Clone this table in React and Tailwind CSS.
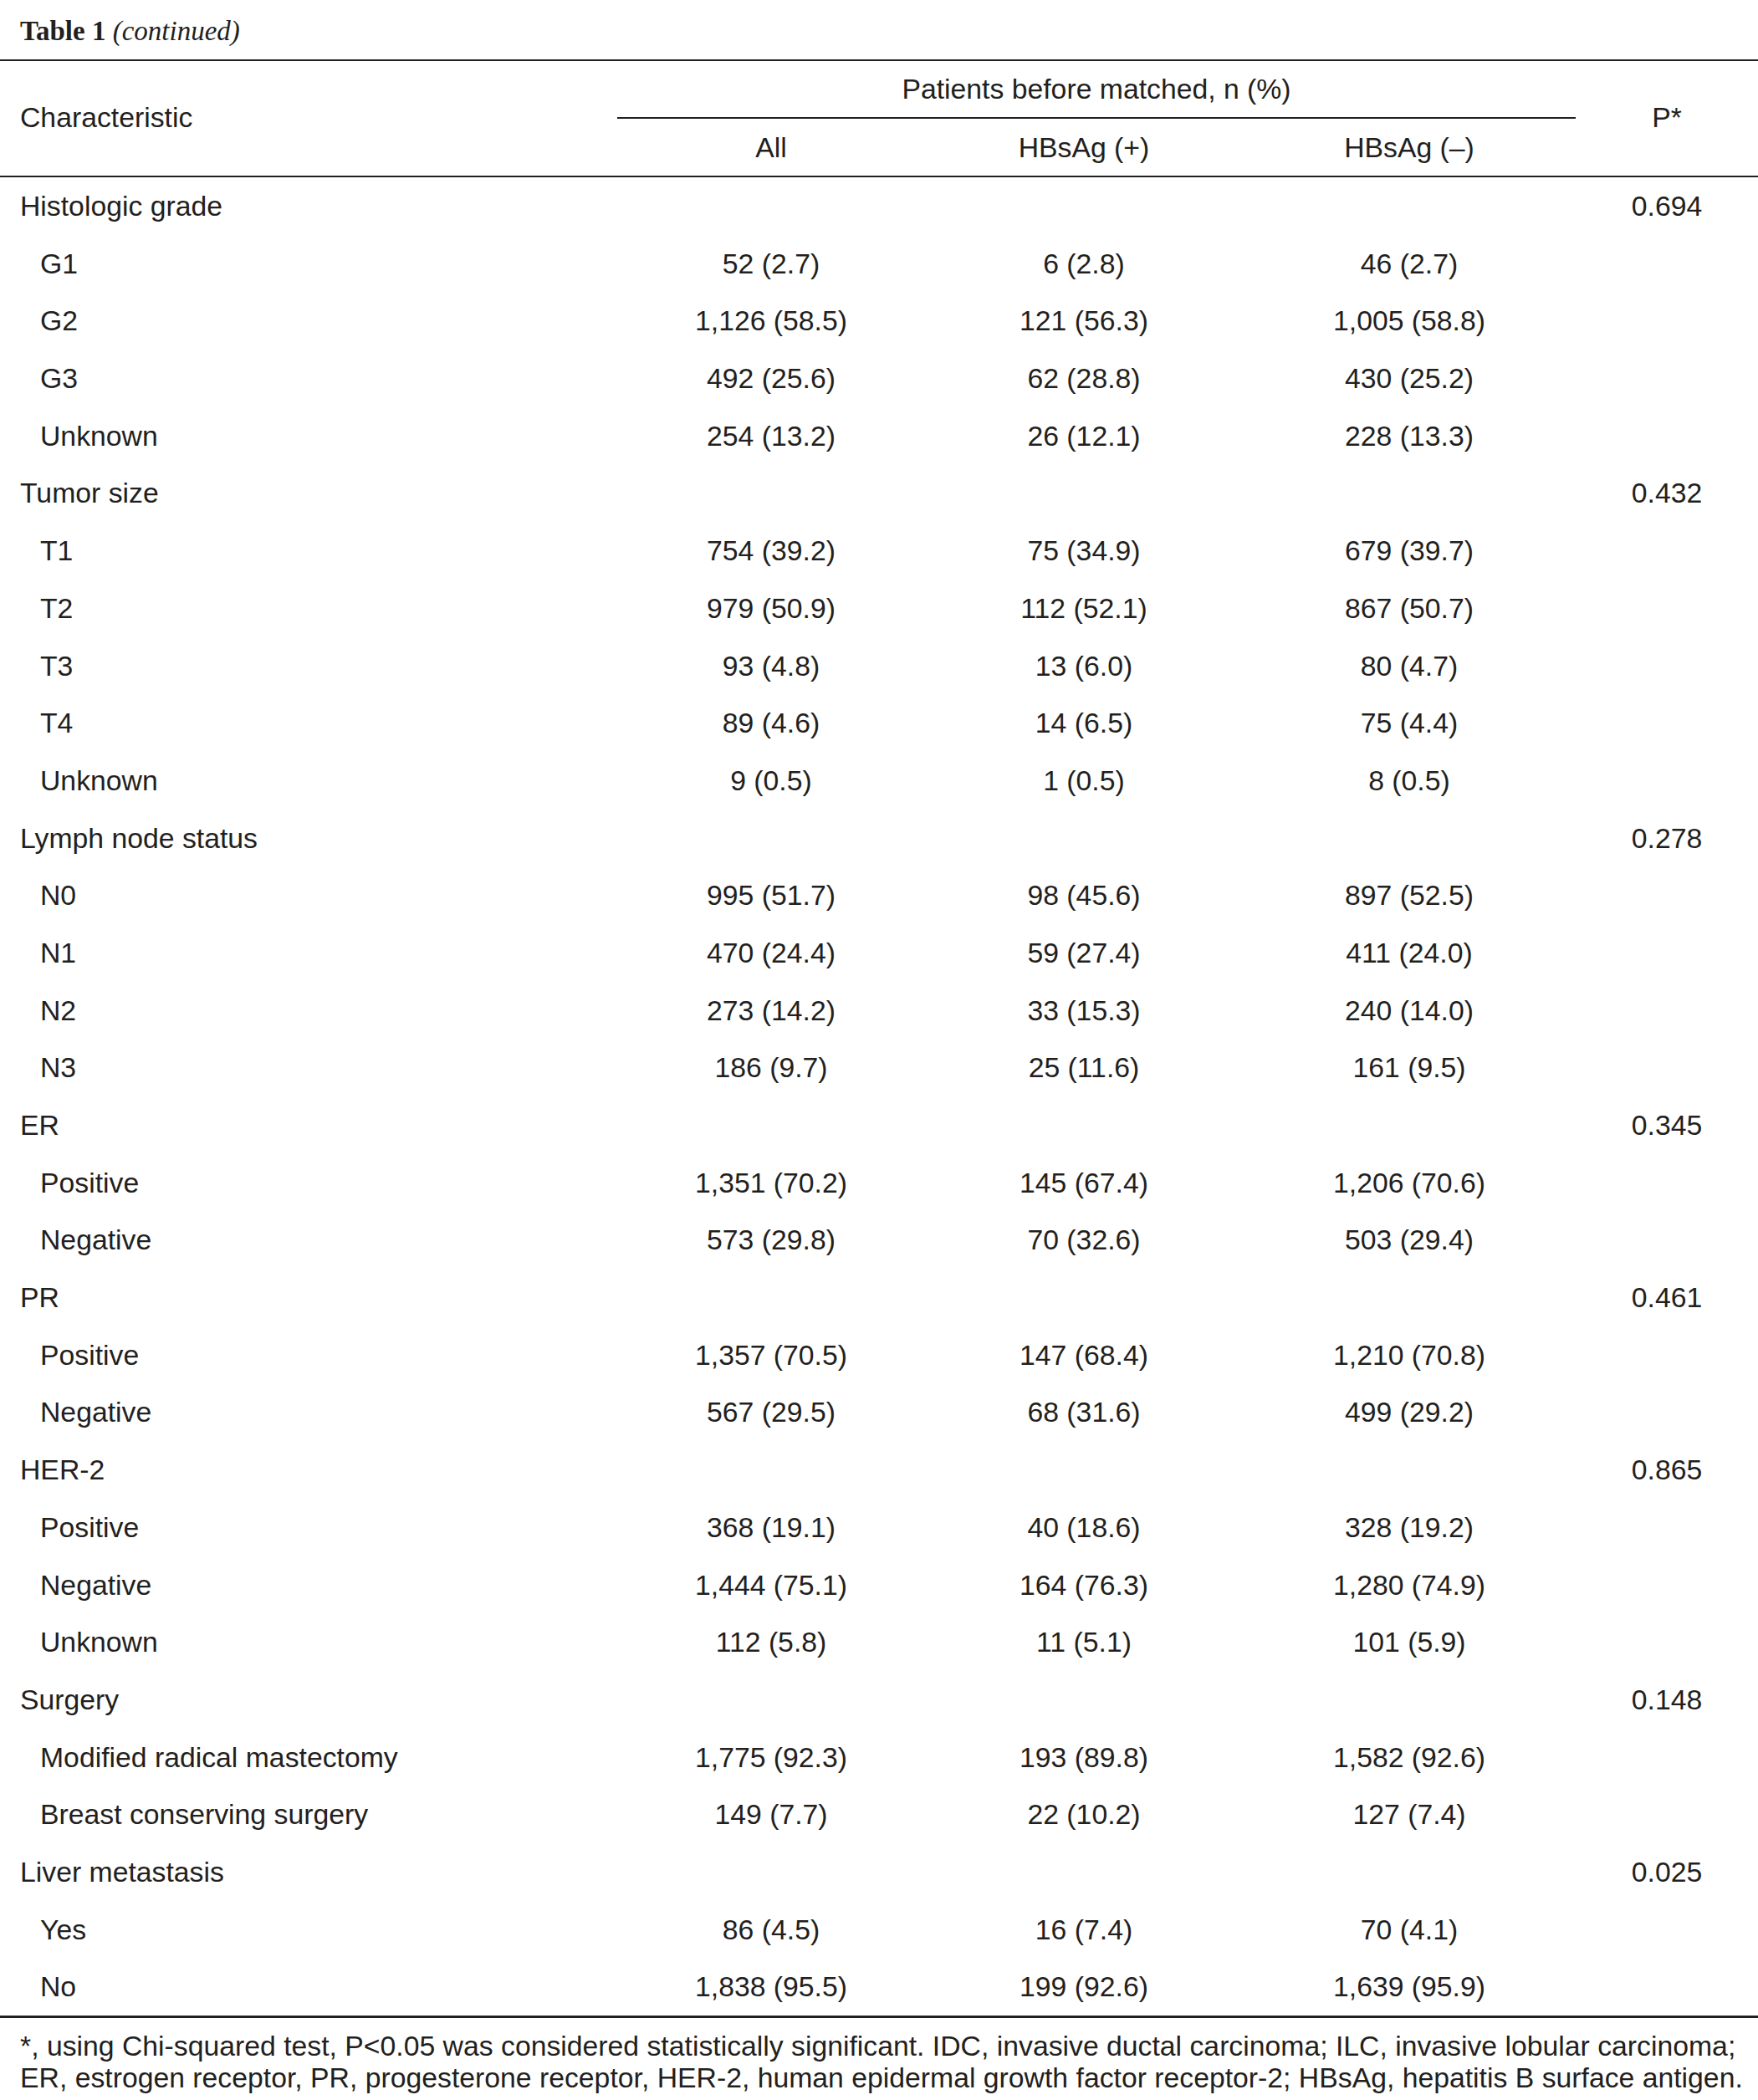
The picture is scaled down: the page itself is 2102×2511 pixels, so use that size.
import React from 'react';

// Table rows: [label, all, hbsag+, hbsag-, p, isSub]
const rows = [
  ['Histologic grade', '', '', '', '0.694', false],
  ['G1', '52 (2.7)', '6 (2.8)', '46 (2.7)', '', true],
  ['G2', '1,126 (58.5)', '121 (56.3)', '1,005 (58.8)', '', true],
  ['G3', '492 (25.6)', '62 (28.8)', '430 (25.2)', '', true],
  ['Unknown', '254 (13.2)', '26 (12.1)', '228 (13.3)', '', true],
  ['Tumor size', '', '', '', '0.432', false],
  ['T1', '754 (39.2)', '75 (34.9)', '679 (39.7)', '', true],
  ['T2', '979 (50.9)', '112 (52.1)', '867 (50.7)', '', true],
  ['T3', '93 (4.8)', '13 (6.0)', '80 (4.7)', '', true],
  ['T4', '89 (4.6)', '14 (6.5)', '75 (4.4)', '', true],
  ['Unknown', '9 (0.5)', '1 (0.5)', '8 (0.5)', '', true],
  ['Lymph node status', '', '', '', '0.278', false],
  ['N0', '995 (51.7)', '98 (45.6)', '897 (52.5)', '', true],
  ['N1', '470 (24.4)', '59 (27.4)', '411 (24.0)', '', true],
  ['N2', '273 (14.2)', '33 (15.3)', '240 (14.0)', '', true],
  ['N3', '186 (9.7)', '25 (11.6)', '161 (9.5)', '', true],
  ['ER', '', '', '', '0.345', false],
  ['Positive', '1,351 (70.2)', '145 (67.4)', '1,206 (70.6)', '', true],
  ['Negative', '573 (29.8)', '70 (32.6)', '503 (29.4)', '', true],
  ['PR', '', '', '', '0.461', false],
  ['Positive', '1,357 (70.5)', '147 (68.4)', '1,210 (70.8)', '', true],
  ['Negative', '567 (29.5)', '68 (31.6)', '499 (29.2)', '', true],
  ['HER-2', '', '', '', '0.865', false],
  ['Positive', '368 (19.1)', '40 (18.6)', '328 (19.2)', '', true],
  ['Negative', '1,444 (75.1)', '164 (76.3)', '1,280 (74.9)', '', true],
  ['Unknown', '112 (5.8)', '11 (5.1)', '101 (5.9)', '', true],
  ['Surgery', '', '', '', '0.148', false],
  ['Modified radical mastectomy', '1,775 (92.3)', '193 (89.8)', '1,582 (92.6)', '', true],
  ['Breast conserving surgery', '149 (7.7)', '22 (10.2)', '127 (7.4)', '', true],
  ['Liver metastasis', '', '', '', '0.025', false],
  ['Yes', '86 (4.5)', '16 (7.4)', '70 (4.1)', '', true],
  ['No', '1,838 (95.5)', '199 (92.6)', '1,639 (95.9)', '', true],
];

const App = () => {
  return (
    <div className="w-[2102px] bg-white text-[#231f20] font-['Liberation_Sans',Arial,sans-serif]">
      {/* Title */}
      <div className="h-[71px] pl-6 pt-[21px] leading-none font-['Liberation_Serif','Times_New_Roman',serif] text-[33px]">
        <span className="font-bold">Table 1</span> <span className="italic">(continued)</span>
      </div>

      {/* Header */}
      <div className="grid grid-cols-[738px_368px_380px_398px_1fr] grid-rows-[69px_68px] border-t-2 border-b-2 border-[#231f20] text-[33.75px]">
        <div className="row-span-2 flex items-center pl-6 pb-[2px]">Characteristic</div>
        <div className="col-span-3 flex items-center justify-center border-b-2 border-[#231f20]">
          Patients before matched, n (%)
        </div>
        <div className="row-span-2 flex items-center justify-center pb-[2px]">P*</div>
        <div className="flex items-center justify-center">All</div>
        <div className="flex items-center justify-center">HBsAg (+)</div>
        <div className="flex items-center justify-center">HBsAg (–)</div>
      </div>

      {/* Body */}
      <div className="border-b-[3px] border-[#231f20] text-[33.75px]">
        {rows.map((r, i) => (
          <div key={i} className="grid grid-cols-[738px_368px_380px_398px_1fr] h-[68.7px] items-center">
            <div className={r[5] ? 'pl-12' : 'pl-6'}>{r[0]}</div>
            <div className="text-center">{r[1]}</div>
            <div className="text-center">{r[2]}</div>
            <div className="text-center">{r[3]}</div>
            <div className="text-center">{r[4]}</div>
          </div>
        ))}
      </div>

      {/* Footnote */}
      <div className="pl-6 pt-[14px] text-[33.75px] leading-[38px] whitespace-nowrap">
        *, using Chi-squared test, P&lt;0.05 was considered statistically significant. IDC, invasive ductal carcinoma; ILC, invasive lobular carcinoma;
        <br />
        ER, estrogen receptor, PR, progesterone receptor, HER-2, human epidermal growth factor receptor-2; HBsAg, hepatitis B surface antigen.
      </div>
    </div>
  );
};

export default App;
